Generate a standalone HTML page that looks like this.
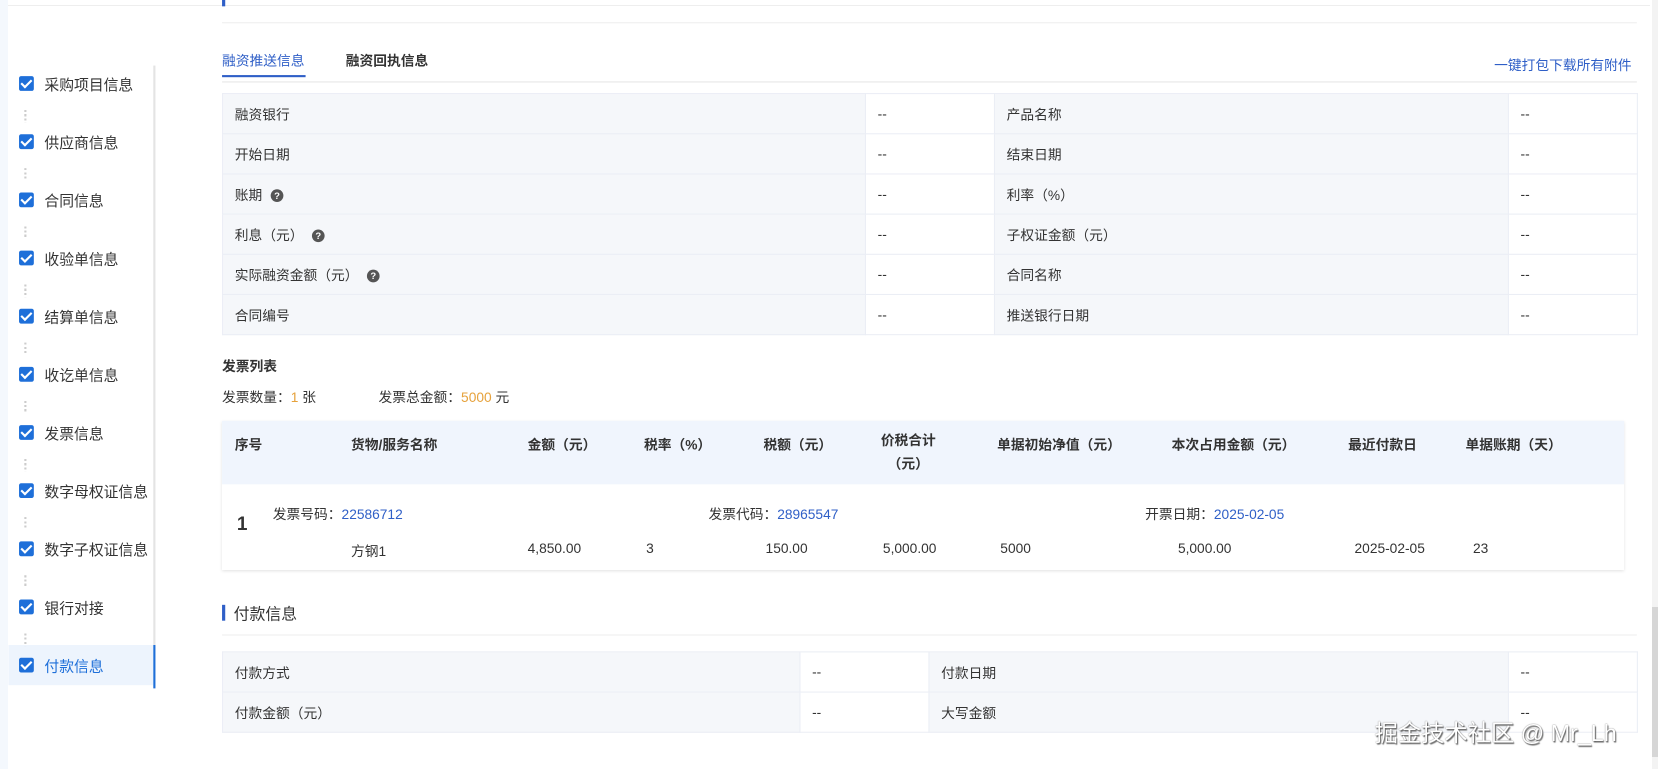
<!DOCTYPE html>
<html><head><meta charset="utf-8"><style>
*{box-sizing:border-box;margin:0;padding:0}
body{width:1658px;height:769px;overflow:hidden;background:#fff;position:relative;font-family:"Liberation Sans","Noto Sans CJK SC",sans-serif;font-size:13px;color:#333}
#w{position:absolute;left:0;top:0;width:1568px;height:727px;transform:scale(1.0574);transform-origin:0 0}
.a{position:absolute;white-space:nowrap}
.cb{position:absolute;left:18px;width:14px;height:14px;background:#1e6fd9;border-radius:2px}
.cb:after{content:"";position:absolute;left:4px;top:1px;width:4px;height:8px;border:solid #fff;border-width:0 2px 2px 0;transform:rotate(45deg)}
.dots{position:absolute;left:23px;width:2px;height:12px;background:repeating-linear-gradient(#ccc 0 2px,transparent 2px 4px)}
.nav{position:absolute;left:42px;font-size:14px;color:#333}
table{border-collapse:collapse;position:absolute;table-layout:fixed}
td{border:1px solid #ebeef5;height:38px;padding:0 11px;font-size:13px;color:#333}
td.l{background:#f5f7fa}
.q{display:inline-block;width:12px;height:12px;border-radius:50%;background:#555;color:#fff;font-size:9px;line-height:12px;text-align:center;font-weight:bold;margin-left:8px;vertical-align:1px}
.h{position:absolute;top:410px;font-weight:bold;font-size:13px;color:#333}
.r{position:absolute;top:511px;font-size:13px}
.blue{color:#2f5fc7}
</style></head><body>
<div class="a" style="left:0;top:5px;width:1650px;height:1px;background:#eee"></div>
<div class="a" style="left:0;top:0;width:8px;height:769px;background:#f4f8fd"></div>
<div class="a" style="left:1652px;top:0;width:6px;height:769px;background:#f3f3f3"></div>
<div class="a" style="left:1652px;top:607px;width:6px;height:150px;background:#d6d6d6"></div>
<div id="w">
<!-- sidebar -->
<div class="a" style="left:145px;top:62px;width:2px;height:589px;background:#e4e4e4"></div>
<div class="a" style="left:8px;top:610px;width:138px;height:38px;background:#edf4fd"></div>
<div class="a" style="left:145px;top:610px;width:2px;height:41px;background:#1e6fd9"></div>
<div class="cb" style="top:72px"></div><div class="nav" style="top:70px">采购项目信息</div><div class="dots" style="top:104px"></div>
<div class="cb" style="top:127px"></div><div class="nav" style="top:125px">供应商信息</div><div class="dots" style="top:159px"></div>
<div class="cb" style="top:182px"></div><div class="nav" style="top:180px">合同信息</div><div class="dots" style="top:214px"></div>
<div class="cb" style="top:237px"></div><div class="nav" style="top:235px">收验单信息</div><div class="dots" style="top:269px"></div>
<div class="cb" style="top:292px"></div><div class="nav" style="top:290px">结算单信息</div><div class="dots" style="top:324px"></div>
<div class="cb" style="top:347px"></div><div class="nav" style="top:345px">收讫单信息</div><div class="dots" style="top:379px"></div>
<div class="cb" style="top:402px"></div><div class="nav" style="top:400px">发票信息</div><div class="dots" style="top:434px"></div>
<div class="cb" style="top:457px"></div><div class="nav" style="top:455px">数字母权证信息</div><div class="dots" style="top:489px"></div>
<div class="cb" style="top:512px"></div><div class="nav" style="top:510px">数字子权证信息</div><div class="dots" style="top:544px"></div>
<div class="cb" style="top:567px"></div><div class="nav" style="top:565px">银行对接</div><div class="dots" style="top:599px"></div>
<div class="cb" style="top:622px"></div><div class="nav" style="top:620px;color:#1e6fd9">付款信息</div>
<!-- top -->
<div class="a" style="left:210px;top:0;width:3px;height:6px;background:#2f5fc7"></div>
<div class="a" style="left:210px;top:21px;width:1338px;height:1px;background:#eee"></div>
<div class="a blue" style="left:210px;top:47px;font-size:13px">融资推送信息</div>
<div class="a" style="left:327px;top:47px;font-size:13px;font-weight:bold">融资回执信息</div>
<div class="a blue" style="left:1413px;top:51px;font-size:13px">一键打包下载所有附件</div>
<div class="a" style="left:210px;top:77px;width:1338px;height:1px;background:#e6e6e6"></div>
<div class="a" style="left:210px;top:71px;width:79px;height:2px;background:#2f5fc7"></div>
<table style="left:210px;top:88px;width:1338px">
<colgroup><col style="width:608px"><col style="width:122px"><col style="width:486px"><col style="width:122px"></colgroup>
<tr><td class="l">融资银行</td><td>--</td><td class="l">产品名称</td><td>--</td></tr>
<tr><td class="l">开始日期</td><td>--</td><td class="l">结束日期</td><td>--</td></tr>
<tr><td class="l">账期<span class="q">?</span></td><td>--</td><td class="l">利率（%）</td><td>--</td></tr>
<tr><td class="l">利息（元）<span class="q">?</span></td><td>--</td><td class="l">子权证金额（元）</td><td>--</td></tr>
<tr><td class="l">实际融资金额（元）<span class="q">?</span></td><td>--</td><td class="l">合同名称</td><td>--</td></tr>
<tr><td class="l">合同编号</td><td>--</td><td class="l">推送银行日期</td><td>--</td></tr>
</table>
<div class="a" style="left:210px;top:336px;font-weight:bold">发票列表</div>
<div class="a" style="left:210px;top:365px">发票数量：<span style="color:#e6a23c">1</span> 张</div>
<div class="a" style="left:358px;top:365px">发票总金额：<span style="color:#e6a23c">5000</span> 元</div>
<!-- invoice table -->
<div class="a" style="left:210px;top:398px;width:1326px;height:141px;box-shadow:0 1px 3px rgba(0,0,0,.12)"></div>
<div class="a" style="left:210px;top:398px;width:1326px;height:60px;background:#f0f5fd"></div>
<div class="h" style="left:222px">序号</div>
<div class="h" style="left:332px">货物/服务名称</div>
<div class="h" style="left:499px">金额（元）</div>
<div class="h" style="left:609px">税率（%）</div>
<div class="h" style="left:722px">税额（元）</div>
<div class="h" style="left:833px;text-align:center;line-height:22px;top:406px">价税合计<br>（元）</div>
<div class="h" style="left:943px">单据初始净值（元）</div>
<div class="h" style="left:1108px">本次占用金额（元）</div>
<div class="h" style="left:1275px">最近付款日</div>
<div class="h" style="left:1386px">单据账期（天）</div>
<div class="a" style="left:224px;top:485px;font-size:18px;font-weight:bold">1</div>
<div class="a" style="left:258px;top:476px">发票号码：<span class="blue">22586712</span></div>
<div class="a" style="left:670px;top:476px">发票代码：<span class="blue">28965547</span></div>
<div class="a" style="left:1083px;top:476px">开票日期：<span class="blue">2025-02-05</span></div>
<div class="r" style="left:332px">方钢1</div>
<div class="r" style="left:499px">4,850.00</div>
<div class="r" style="left:611px">3</div>
<div class="r" style="left:724px">150.00</div>
<div class="r" style="left:835px">5,000.00</div>
<div class="r" style="left:946px">5000</div>
<div class="r" style="left:1114px">5,000.00</div>
<div class="r" style="left:1281px">2025-02-05</div>
<div class="r" style="left:1393px">23</div>
<!-- payment -->
<div class="a" style="left:210px;top:572px;width:3px;height:15px;background:#2f5fc7"></div>
<div class="a" style="left:221px;top:570px;font-size:15px">付款信息</div>
<div class="a" style="left:210px;top:600px;width:1338px;height:1px;background:#eee"></div>
<table style="left:210px;top:616px;width:1338px">
<colgroup><col style="width:546px"><col style="width:122px"><col style="width:548px"><col style="width:122px"></colgroup>
<tr><td class="l">付款方式</td><td>--</td><td class="l">付款日期</td><td>--</td></tr>
<tr><td class="l">付款金额（元）</td><td>--</td><td class="l">大写金额</td><td>--</td></tr>
</table>
<div class="a" style="left:1300px;top:676px;font-size:22px;color:#fff;text-shadow:0 0 1px #555,1px 1px 1px #666">掘金技术社区 @ Mr_Lh</div>
</div>
</body></html>
